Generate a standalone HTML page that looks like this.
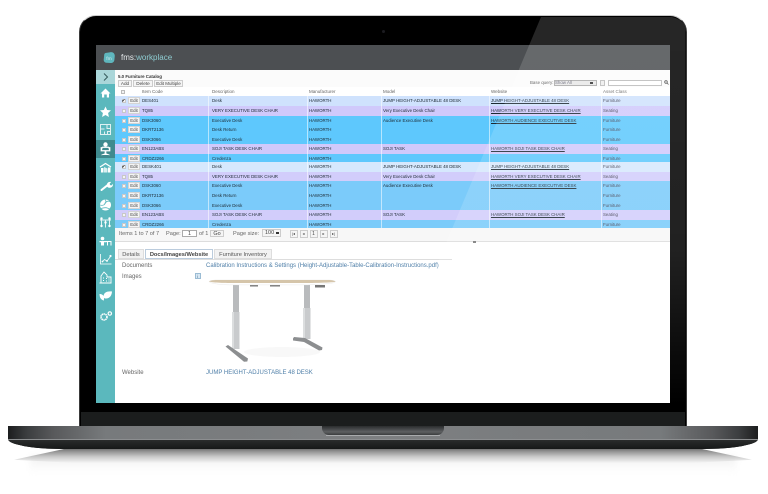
<!DOCTYPE html>
<html>
<head>
<meta charset="utf-8">
<style>
html,body{margin:0;padding:0;background:#fff}
#p{position:relative;width:768px;height:494px;overflow:hidden;background:#fff;font-family:"Liberation Sans",sans-serif}
#p div,#p span{position:absolute;box-sizing:border-box}
.t{font-size:4.5px;line-height:8px;color:#333;white-space:nowrap}
.r{left:0;width:555px}
.r span{font-size:4.4px;line-height:9px;top:0;white-space:nowrap;color:#1d2a33}
.r .u{text-decoration:underline}
.r .cb{width:4px;height:4px;left:6.5px;top:3px;background:#f4f4f4;border:.5px solid #c8c8c8}
.r .e{left:13px;top:1.2px;width:12px;height:7px;background:#f4f4f4;border:.5px solid #d4d4d4;font-size:4.4px;line-height:6px;text-align:center;color:#444}
.btn{background:#f5f5f5;border:.5px solid #ccc;font-size:4.7px;line-height:6.5px;text-align:center;color:#444;height:8px;white-space:nowrap;overflow:hidden}
.c{left:27px}.d{left:97px}.m{left:194px}.o{left:268px}.w{left:376px}.a{left:488px}
.r .a{color:#445}
.l{background:rgba(255,255,255,.55);width:.7px;top:87px;height:141px}
.pg{font-size:5.6px;line-height:8px;color:#666;white-space:nowrap}
.tab{font-size:5.7px;line-height:10px;text-align:center;top:248.5px;height:10px;color:#555;background:#f2f2f2;border:.5px solid #ddd;white-space:nowrap}
.lb{font-size:6px;line-height:8px;color:#666;left:122px}
.lk{font-size:6px;line-height:8px;color:#4f7fa8;left:206px;white-space:nowrap}
svg{position:absolute;overflow:visible}
</style>
</head>
<body>
<div id="p">
<!-- shadow -->
<div style="left:30px;top:456px;width:706px;height:18px;background:linear-gradient(#f0f0f0,#fafafa 55%,#fff);filter:blur(3px)"></div>
<div style="left:14px;top:447px;width:738px;height:16px;background:linear-gradient(#5a5a5a,#8e8e8e 25%,#c8c8c8 60%,rgba(255,255,255,0));clip-path:polygon(0 80%,7% 10%,93% 10%,100% 80%,92% 100%,8% 100%);filter:blur(.8px)"></div>
<!-- lid -->
<div style="left:79px;top:15px;width:608px;height:412px;background:#000;border-radius:17px 17px 0 0;border:1.5px solid #3a3a3a;border-top-color:#c9c9c9;border-bottom:0"></div>
<div style="left:81px;top:412px;width:604px;height:14px;background:#1b1d1d"></div>
<div style="left:382px;top:30px;width:3px;height:3px;border-radius:50%;background:#1b1b20"></div>
<!-- screen -->
<div style="left:96px;top:45px;width:574px;height:358px;background:#fff"></div>
<div style="left:0;top:0;width:768px;height:494px;filter:blur(.35px)">
<div style="left:96px;top:45px;width:574px;height:25px;background:#4c4f52"></div>
<svg style="left:102.5px;top:50.5px" width="13" height="13" viewBox="0 0 16 16"><path d="M3 2.500 9 1.500c3-.6 5.500 1.500 5.500 4.500l-.5 5c-.3 2.500-2.500 4-5 3.800L4 14.500C1.500 14 .5 12 1 9.500L1.500 4.500C1.700 3.500 2.200 2.700 3 2.500Z" fill="#5fb6bd"/><text x="4" y="11" font-family="Liberation Sans" font-size="6" fill="#d8eef0">fm</text></svg>
<div style="left:121px;top:52.5px;font-size:8px;line-height:10px;color:#e4e8ea;white-space:nowrap">fms<span style="position:static;color:#e4e8ea">:</span><span style="position:static;color:#8fcdd2">workplace</span></div>
<!-- toolbar -->
<div style="left:115px;top:70px;width:555px;height:17px;background:#fbfbfb"></div>
<!-- table header -->
<div style="left:115px;top:87px;width:555px;height:9px;background:#fff"></div>
<div class="t" style="left:118px;top:72.500px;font-size:4.400px;font-weight:bold;color:#333">5.0 Furniture Catalog</div>
<div class="btn" style="left:118px;top:80px;width:14px;height:7px">Add</div>
<div class="btn" style="left:133px;top:80px;width:20px;height:7px">Delete</div>
<div class="btn" style="left:154px;top:80px;width:29px;height:7px;font-size:4.500px">Edit Multiple</div>
<div class="t" style="left:530px;top:78.500px;color:#555;font-size:4.400px">Base query:</div>
<div style="left:553.500px;top:80px;width:43px;height:6px;background:#e8e8e8;border:.5px solid #aaa"></div>
<div class="t" style="left:555px;top:79px;font-size:4.400px;color:#667">Show All</div>
<div style="left:590px;top:82px;width:3px;height:2px;background:#333"></div>
<div style="left:600px;top:80px;width:5px;height:6px;background:#eee;border:.5px solid #bbb"></div>
<div style="left:608px;top:80px;width:54px;height:6px;background:#fff;border:.5px solid #bbb"></div>
<svg style="left:664px;top:80px" width="5" height="5" viewBox="0 0 5 5"><circle cx="2" cy="2" r="1.300" fill="none" stroke="#444" stroke-width=".8"/><path d="M3 3 4.500 4.500" stroke="#444" stroke-width=".8"/></svg>
<div style="left:121px;top:89.500px;width:4px;height:4px;background:#f2f2f2;border:.5px solid #bbb"></div>
<div class="t" style="left:142px;top:87.500px;color:#666">Item Code</div>
<div class="t" style="left:212px;top:87.500px;color:#666">Description</div>
<div class="t" style="left:309px;top:87.500px;color:#666">Manufacturer</div>
<div class="t" style="left:383px;top:87.500px;color:#666">Model</div>
<div class="t" style="left:491px;top:87.500px;color:#666">Website</div>
<div class="t" style="left:603px;top:87.500px;color:#666">Asset Class</div>
<!-- rows -->
<div style="left:115px;top:0;width:555px;height:240px">
<div class="r" style="top:96px;height:10px;background:#cfe2fd"><span class="cb"></span><span style="left:6.500px;top:0;color:#222">✔</span><span class="e">Edit</span><span class="c">DES401</span><span class="d">Desk</span><span class="m">HAWORTH</span><span class="o">JUMP HEIGHT-ADJUSTABLE 48 DESK</span><span class="w u">JUMP HEIGHT-ADJUSTABLE 48 DESK</span><span class="a">Furniture</span></div>
<div class="r" style="top:106px;height:9.500px;background:#d0c9fb"><span class="cb"></span><span class="e">Edit</span><span class="c">TQ85</span><span class="d">VERY EXECUTIVE DESK CHAIR</span><span class="m">HAWORTH</span><span class="o">Very Executive Desk Chair</span><span class="w u">HAWORTH VERY EXECUTIVE DESK CHAIR</span><span class="a">Seating</span></div>
<div class="r" style="top:115.500px;height:9.500px;background:#5ec8fd"><span class="cb"></span><span class="e">Edit</span><span class="c">DSK3060</span><span class="d">Executive Desk</span><span class="m">HAWORTH</span><span class="o">Audience Executive Desk</span><span class="w u">HAWORTH AUDIENCE EXECUTIVE DESK</span><span class="a">Furniture</span></div>
<div class="r" style="top:125px;height:9.500px;background:#5ec8fd"><span class="cb"></span><span class="e">Edit</span><span class="c">DKRT2136</span><span class="d">Desk Return</span><span class="m">HAWORTH</span><span class="a">Furniture</span></div>
<div class="r" style="top:134.500px;height:9.500px;background:#5ec8fd"><span class="cb"></span><span class="e">Edit</span><span class="c">DSK3066</span><span class="d">Executive Desk</span><span class="m">HAWORTH</span><span class="a">Furniture</span></div>
<div class="r" style="top:144px;height:10px;background:#d0c9fb"><span class="cb"></span><span class="e">Edit</span><span class="c">EN123ABS</span><span class="d">SOJI TASK DESK CHAIR</span><span class="m">HAWORTH</span><span class="o">SOJI TASK</span><span class="w u">HAWORTH SOJI TASK DESK CHAIR</span><span class="a">Seating</span></div>
<div class="r" style="top:154px;height:8px;overflow:hidden;background:#5ec8fd"><span class="cb"></span><span class="e">Edit</span><span class="c">CRDZ2266</span><span class="d">Credenza</span><span class="m">HAWORTH</span><span class="a">Furniture</span></div>
<div class="r" style="top:162px;height:9.500px;background:#d6e8fd"><span class="cb"></span><span style="left:6.500px;top:0;color:#222">✔</span><span class="e">Edit</span><span class="c">DESK401</span><span class="d">Desk</span><span class="m">HAWORTH</span><span class="o">JUMP HEIGHT-ADJUSTABLE 48 DESK</span><span class="w u">JUMP HEIGHT-ADJUSTABLE 48 DESK</span><span class="a">Furniture</span></div>
<div class="r" style="top:171.500px;height:9.500px;background:#d2cdfb"><span class="cb"></span><span class="e">Edit</span><span class="c">TQ85</span><span class="d">VERY EXECUTIVE DESK CHAIR</span><span class="m">HAWORTH</span><span class="o">Very Executive Desk Chair</span><span class="w u">HAWORTH VERY EXECUTIVE DESK CHAIR</span><span class="a">Seating</span></div>
<div class="r" style="top:181px;height:10px;background:#7bcbfa"><span class="cb"></span><span class="e">Edit</span><span class="c">DSK3060</span><span class="d">Executive Desk</span><span class="m">HAWORTH</span><span class="o">Audience Executive Desk</span><span class="w u">HAWORTH AUDIENCE EXECUTIVE DESK</span><span class="a">Furniture</span></div>
<div class="r" style="top:191px;height:9.500px;background:#7bcbfa"><span class="cb"></span><span class="e">Edit</span><span class="c">DKRT2136</span><span class="d">Desk Return</span><span class="m">HAWORTH</span><span class="a">Furniture</span></div>
<div class="r" style="top:200.500px;height:9.500px;background:#7bcbfa"><span class="cb"></span><span class="e">Edit</span><span class="c">DSK3066</span><span class="d">Executive Desk</span><span class="m">HAWORTH</span><span class="a">Furniture</span></div>
<div class="r" style="top:210px;height:10px;background:#d2cdfb"><span class="cb"></span><span class="e">Edit</span><span class="c">EN123ABS</span><span class="d">SOJI TASK DESK CHAIR</span><span class="m">HAWORTH</span><span class="o">SOJI TASK</span><span class="w u">HAWORTH SOJI TASK DESK CHAIR</span><span class="a">Seating</span></div>
<div class="r" style="top:220px;height:8px;overflow:hidden;background:#7bcbfa"><span class="cb"></span><span class="e">Edit</span><span class="c">CRDZ2266</span><span class="d">Credenza</span><span class="m">HAWORTH</span><span class="a">Furniture</span></div>
</div>
<div class="l" style="left:208px"></div><div class="l" style="left:306.500px"></div><div class="l" style="left:380.500px"></div><div class="l" style="left:488.500px"></div><div class="l" style="left:600.500px"></div>
<!-- pager -->
<div style="left:115px;top:228px;width:555px;height:13px;background:#f7f7f7"></div>
<div style="left:115px;top:241px;width:555px;height:.8px;background:#ddd"></div>
<div style="left:473px;top:241px;width:3px;height:2px;background:#777"></div>
<div class="pg" style="left:119px;top:229.500px">Items 1 to 7 of 7</div>
<div class="pg" style="left:166px;top:229.500px">Page:</div>
<div style="left:182px;top:229.500px;width:15px;height:7.500px;background:#fff;border:.5px solid #aaa;font-size:5.500px;line-height:6.500px;text-align:center;color:#444">1</div>
<div class="pg" style="left:199px;top:229.500px">of 1</div>
<div class="btn" style="left:210px;top:229.500px;width:14px;height:7.500px;font-size:5.500px">Go</div>
<div class="pg" style="left:233px;top:229.500px">Page size:</div>
<div class="btn" style="left:262px;top:229px;width:19px;height:8px;text-align:left;padding-left:2px;font-size:5.500px">100</div>
<div style="left:276px;top:232px;width:3px;height:2px;background:#333"></div>
<div class="btn" style="left:289.500px;top:229.500px;width:8px;height:8px;font-size:4px">|◂</div>
<div class="btn" style="left:299.500px;top:229.500px;width:8px;height:8px;font-size:4px">◂</div>
<div class="btn" style="left:309.500px;top:229.500px;width:8px;height:8px;font-size:5px">1</div>
<div class="btn" style="left:319.500px;top:229.500px;width:8px;height:8px;font-size:4px">▸</div>
<div class="btn" style="left:329.500px;top:229.500px;width:8px;height:8px;font-size:4px">▸|</div>
<!-- tabs -->
<div class="tab" style="left:118px;width:26px">Details</div>
<div class="tab" style="left:145px;width:68px;background:#fff;font-weight:bold;color:#444;border-color:#bcd">Docs/Images/Website</div>
<div class="tab" style="left:214px;width:58px">Furniture Inventory</div>
<div style="left:115px;top:258.500px;width:337px;height:.7px;background:#ddd"></div>
<div class="lb" style="top:262px">Documents</div>
<div class="lk" style="top:262px">Calibration Instructions &amp; Settings (Height-Adjustable-Table-Calibration-Instructions.pdf)</div>
<div class="lb" style="top:273px">Images</div>
<div style="left:194.500px;top:273px;width:6px;height:6px;background:#d8e8f4;border:.5px solid #9bbcd4;font-size:4.500px;line-height:5px;text-align:center;color:#46708f">i</div>
<svg style="left:200px;top:275px" width="145" height="95" viewBox="200 275 145 95">
<ellipse cx="282" cy="352" rx="38" ry="5" fill="#f8f8f8"/>
<path d="M233 285h6v27h-6Z" fill="#b9bbbd"/><path d="M232 312h7.500v37H232Z" fill="#c9cbcd"/><path d="M232 312h2v37h-2Z" fill="#dcdedf"/>
<path d="M225.500 346.500l2.500-1.500 20 13.500-.7 3-3.300.3Z" fill="#8c8e90"/>
<path d="M304 285h6v23h-6Z" fill="#b9bbbd"/><path d="M303 308h7.500v31H303Z" fill="#c9cbcd"/><path d="M303 308h2v31h-2Z" fill="#dcdedf"/>
<path d="M293 338.500l1-1.500 11 1 17.500 9.500-.5 2.500-3 .5-15-8.500-11-1.500Z" fill="#8c8e90"/>
<path d="M250 285h8v1.500h-8ZM270 285h10v1.500h-10ZM315 285h10v2.500h-10Z" fill="#777"/>
<path d="M209 281.500c1-1 4-1.500 8-1.500H328c4 0 7 .7 7.500 1.700-.5.900-3 1.500-8 2l-20 1.200H232c-12 0-22-1.500-23-3.400Z" fill="#fff" stroke="#e5e5e5" stroke-width=".4"/>
<path d="M209 281.500c1-1 4-1.500 8-1.500H328c4 0 7 .7 7.500 1.700-3 .7-15 1.300-40 1.300H232c-12 0-21-.7-23-1.500Z" fill="#d5c5aa"/>
</svg>
<div class="lb" style="top:369px">Website</div>
<div class="lk" style="top:369px">JUMP HEIGHT-ADJUSTABLE 48 DESK</div>
<!-- sidebar -->
<div style="left:96px;top:70px;width:19px;height:333px;background:#5bb8bd"></div>
<div style="left:96px;top:70px;width:19px;height:14px;background:#aad6d9"></div>
<div style="left:96px;top:140px;width:19px;height:18px;background:#3f8a8e"></div>
<svg style="left:96px;top:70px" width="19" height="260" viewBox="0 0 19 260" fill="#fff" stroke="none">
<path d="M8 3.500 11.500 7 8 10.500" fill="none" stroke="#35595c" stroke-width="1"/>
<!-- home -->
<path d="M9.500 18.500 14.500 23.500H13V27.500H10.800V24.500H8.200V27.500H6V23.500H4.500Z"/>
<!-- star -->
<path d="M9.500 36.500 11.100 40 15 40.400 12.100 43 12.900 47 9.500 45 6.100 47 6.900 43 4 40.400 7.900 40Z"/>
<!-- plan -->
<path d="M4.500 54.500h10v10h-10ZM4.500 59h4M11 54.500v4h3.500M8.500 64.500v-3M11.500 64.500v-3h3" fill="none" stroke="#dff1f2" stroke-width="1"/>
<!-- chair -->
<circle cx="9.500" cy="74.500" r="2.200"/><path d="M6.500 77h6l1 3.500h-8ZM5 77.500v3.500h9v-3.500ZM9 81h1v2h-1ZM5.500 85l4-1.500 4 1.500" stroke="#fff" stroke-width=".7"/>
<!-- house -->
<path d="M4 97 9.500 93.500 15 97" fill="none" stroke="#fff" stroke-width="1.200"/><path d="M5 98h2.500V102.500H5ZM12 97.500h2.500v5H12Z"/><path d="M8 97 11.500 98.500v4H8Z" fill="#d9f0f1"/>
<!-- wrench -->
<path d="M5.500 120 12 114.800" stroke="#fff" stroke-width="2" stroke-linecap="round" fill="none"/><path d="M11 114c.5-1.800 2.500-2.500 4.200-2l-1.600 1.700.5 1.400 1.500.3 1.400-1.500c.3 1.800-.9 3.500-2.800 3.800-1.400.2-2.300-.3-3-1Z"/>
<!-- globe -->
<circle cx="9.500" cy="135" r="5.500"/><path d="M4 135c3 1 4.500 0 5.500-2s3-2.500 5.500-1M5 138.500c3-1 5.500-1 7-.2s2.300 1 3-1.300M9 129.500c1.500 1.500 1 3-.5 4" fill="none" stroke="#5bb8bd" stroke-width=".8"/>
<!-- people -->
<path d="M4 150h11M5.500 150v7M13.500 150v7M9.500 149.500v8" stroke="#e4f4f5" stroke-width="1" fill="none"/><circle cx="5.500" cy="148.500" r="1.200"/><circle cx="13.500" cy="148.500" r="1.200"/><circle cx="9.500" cy="152.500" r="1.200"/><circle cx="5.500" cy="156" r="1.200"/><circle cx="13.500" cy="156" r="1.200"/>
<!-- desk person -->
<circle cx="6.500" cy="168.500" r="1.800"/><path d="M3.500 171h7v1.300h-7ZM5 172.300h3v3.200H5Z"/><path d="M10 171h5.500v1H10ZM11 172h1v3.500h-1ZM14.500 172h1v3.500h-1Z"/>
<!-- chart -->
<path d="M4.500 184v10h11" fill="none" stroke="#fff" stroke-width=".8"/><path d="M6 192l2.500-2.500 2.500 1.500 3.500-4.500" fill="none" stroke="#fff" stroke-width=".8"/><circle cx="6.500" cy="191.500" r=".9"/><circle cx="11" cy="191" r=".9"/><circle cx="14.500" cy="186" r="1.100"/>
<!-- building -->
<path d="M5 213v-7l3-4 3 3v2h4v6ZM3.500 213h12" fill="none" stroke="#fff" stroke-width=".9"/><path d="M7 208h1M7 210.500h1M10 208.500h1M12.500 209h1M12.500 211h1M10 211h1" stroke="#fff" stroke-width=".9"/>
<!-- leaf -->
<path d="M16 221.500c-5-.5-8 1-8.500 4.500-.2 1.500.7 2.300 1.700 2.500 4 .5 6.500-2.500 6.800-7Z"/><path d="M3.500 224c2 0 4 .7 4.500 3.500.1 1-.2 2 0 3-3-.5-4.500-3-4.500-6.500Z"/>
<!-- gears -->
<circle cx="8" cy="247" r="3" fill="none" stroke="#fff" stroke-width="1.600" stroke-dasharray="1.400 .5"/><circle cx="13.800" cy="243.500" r="1.700" fill="none" stroke="#fff" stroke-width="1.200"/>
</svg>
</div>
<!-- glare -->
<svg style="left:0;top:0" width="768" height="494" viewBox="0 0 768 494"><defs><linearGradient id="g" x1="0" y1="17" x2="0" y2="405" gradientUnits="userSpaceOnUse"><stop offset="0" stop-color="#fff" stop-opacity=".15"/><stop offset=".6" stop-color="#fff" stop-opacity=".13"/><stop offset="1" stop-color="#fff" stop-opacity="0"/></linearGradient></defs><path d="M541 17H672Q685 20 685.500 30V405H378Z" fill="url(#g)"/></svg>
<!-- base -->
<div style="left:8px;top:426px;width:750px;height:23px;background:#1d1f1f;border-radius:0 0 55px 55px/0 0 10px 10px;overflow:hidden">
<div style="left:0;top:0;width:750px;height:12.500px;background:linear-gradient(90deg,#1c1d1e 0,#3b3d3f 2.500%,#58595b 6%,#777a7c 13%,#7d7f81 50%,#777a7c 87%,#58595b 94%,#3b3d3f 97.500%,#1c1d1e 100%)"></div>
<div style="left:0;top:12.500px;width:750px;height:1px;background:#8c8e90"></div>
<div style="left:0;top:13.500px;width:750px;height:9.500px;background:linear-gradient(#2a2c2c,#161818)"></div>
</div>
<div style="left:322px;top:426px;width:122px;height:9px;background:linear-gradient(#2a2c2d,#5e6062 65%,#3a3c3d);border-radius:0 0 7px 7px"></div>
<div style="left:326px;top:435px;width:114px;height:1px;background:#a9abad"></div>
</div>
</body>
</html>
